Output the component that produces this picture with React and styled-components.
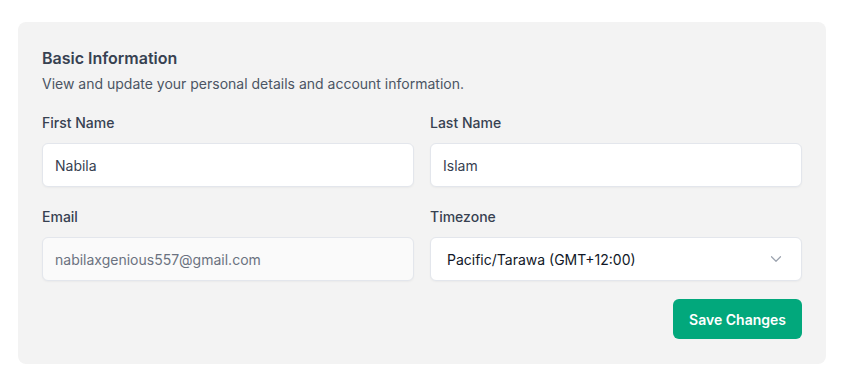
import React from 'react'
import styled, { createGlobalStyle } from 'styled-components'

const GlobalStyle = createGlobalStyle`
  body {
    margin: 0;
    background: #ffffff;
    font-family: Inter, "Noto Sans", sans-serif;
  }
`

function App() {
  return (
    <>
      <GlobalStyle />
      <Page>
        <Card>
          <Title>Basic Information</Title>
          <Subtitle>View and update your personal details and account information.</Subtitle>
          <FieldGrid>
            <Field>
              <Label>First Name</Label>
              <Input defaultValue="Nabila" />
            </Field>
            <Field>
              <Label>Last Name</Label>
              <Input defaultValue="Islam" />
            </Field>
            <Field>
              <Label>Email</Label>
              <Input defaultValue="nabilaxgenious557@gmail.com" disabled $muted />
            </Field>
            <Field>
              <Label>Timezone</Label>
              <SelectBox>
                <span>Pacific/Tarawa (GMT+12:00)</span>
                <svg width="18" height="18" viewBox="0 0 24 24" fill="none" stroke="#9ca3af" strokeWidth="1.6" strokeLinecap="round" strokeLinejoin="round">
                  <path d="m6 9 6 6 6-6" />
                </svg>
              </SelectBox>
            </Field>
          </FieldGrid>
          <Actions>
            <SaveButton>Save Changes</SaveButton>
          </Actions>
        </Card>
      </Page>
    </>
  )
}

const Page = styled.div`
  padding: 22px 18px 24px 18px;
`

const Card = styled.div`
  background: #f3f3f3;
  border-radius: 8px;
  padding: 24px 24px 25px 24px;
  display: flex;
  flex-direction: column;
`

const Title = styled.h2`
  margin: 0;
  font-size: 16px;
  line-height: 24px;
  font-weight: 600;
  color: #374151;
`

const Subtitle = styled.p`
  margin: 4px 0 0 0;
  font-size: 14px;
  line-height: 20px;
  color: #4b5563;
`

const FieldGrid = styled.div`
  margin-top: 19px;
  display: grid;
  grid-template-columns: 1fr 1fr;
  column-gap: 16px;
  row-gap: 20px;
`

const Field = styled.div`
  display: flex;
  flex-direction: column;
  gap: 10px;
`

const Label = styled.label`
  font-size: 14px;
  line-height: 20px;
  font-weight: 500;
  color: #374151;
`

const Input = styled.input`
  box-sizing: border-box;
  height: 44px;
  width: 100%;
  padding: 0 12px;
  border: 1px solid #e3e6ec;
  border-radius: 6px;
  background: ${p => (p.$muted ? '#fafafa' : '#ffffff')};
  color: ${p => (p.$muted ? '#6b7280' : '#374151')};
  -webkit-text-fill-color: ${p => (p.$muted ? '#6b7280' : '#374151')};
  font-family: inherit;
  font-size: 14px;
  box-shadow: 0 1px 2px rgba(0, 0, 0, 0.04);
  outline: none;
`

const SelectBox = styled.div`
  box-sizing: border-box;
  height: 44px;
  display: flex;
  align-items: center;
  justify-content: space-between;
  padding: 0 16px 0 16px;
  border: 1px solid #e3e6ec;
  border-radius: 6px;
  background: #ffffff;
  color: #111827;
  font-size: 14px;
  box-shadow: 0 1px 2px rgba(0, 0, 0, 0.04);
`

const Actions = styled.div`
  margin-top: 18px;
  display: flex;
  justify-content: flex-end;
`

const SaveButton = styled.button`
  height: 40px;
  padding: 0 16px;
  border: none;
  border-radius: 6px;
  background: #02a87c;
  color: #ffffff;
  font-family: inherit;
  font-size: 14px;
  font-weight: 600;
  cursor: pointer;
`

export default App
